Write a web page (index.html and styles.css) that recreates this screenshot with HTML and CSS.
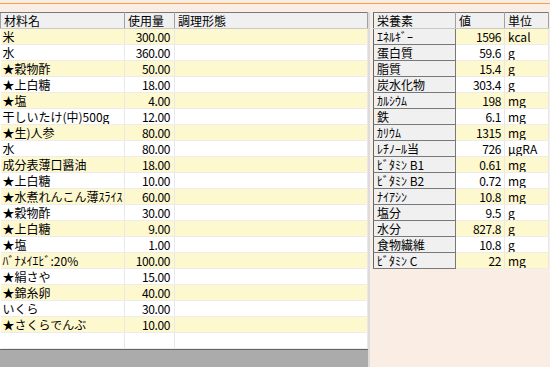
FILE: index.html
```html
<!DOCTYPE html>
<html>
    <head>
        <title>Recipe Nutrition</title>

        <link rel="stylesheet" href="styles.css">
    </head>

    <body>
        <div class="top-bar"></div>

        <div class="panels">
            <div class="recipe-panel">
                <table class="recipe-table">
                    <thead>
                        <tr>
                            <th class="col-name">材料名</th>
                            <th class="col-qty">使用量</th>
                            <th class="col-cook">調理形態</th>
                        </tr>
                    </thead>
                    <tbody>
                        <tr><td>米</td><td class="num">300.00</td><td></td></tr>
                        <tr><td>水</td><td class="num">360.00</td><td></td></tr>
                        <tr><td>★穀物酢</td><td class="num">50.00</td><td></td></tr>
                        <tr><td>★上白糖</td><td class="num">18.00</td><td></td></tr>
                        <tr><td>★塩</td><td class="num">4.00</td><td></td></tr>
                        <tr><td>干しいたけ(中)500g</td><td class="num">12.00</td><td></td></tr>
                        <tr><td>★生)人参</td><td class="num">80.00</td><td></td></tr>
                        <tr><td>水</td><td class="num">80.00</td><td></td></tr>
                        <tr><td>成分表薄口醤油</td><td class="num">18.00</td><td></td></tr>
                        <tr><td>★上白糖</td><td class="num">10.00</td><td></td></tr>
                        <tr><td><div class="clip">★水煮れんこん薄ｽﾗｲｽ</div></td><td class="num">60.00</td><td></td></tr>
                        <tr><td>★穀物酢</td><td class="num">30.00</td><td></td></tr>
                        <tr><td>★上白糖</td><td class="num">9.00</td><td></td></tr>
                        <tr><td>★塩</td><td class="num">1.00</td><td></td></tr>
                        <tr><td>ﾊﾞﾅﾒｲｴﾋﾞ:20%</td><td class="num">100.00</td><td></td></tr>
                        <tr><td>★絹さや</td><td class="num">15.00</td><td></td></tr>
                        <tr><td>★錦糸卵</td><td class="num">40.00</td><td></td></tr>
                        <tr><td>いくら</td><td class="num">30.00</td><td></td></tr>
                        <tr><td>★さくらでんぶ</td><td class="num">10.00</td><td></td></tr>
                        <tr><td></td><td></td><td></td></tr>
                    </tbody>
                </table>
                <div class="recipe-footer"></div>
            </div>

            <div class="nutrient-panel">
                <table class="nutrient-table">
                    <thead>
                        <tr>
                            <th class="col-nutrient">栄養素</th>
                            <th class="col-value">値</th>
                            <th class="col-unit">単位</th>
                        </tr>
                    </thead>
                    <tbody>
                        <tr><th>ｴﾈﾙｷﾞｰ</th><td class="num">1596</td><td>kcal</td></tr>
                        <tr><th>蛋白質</th><td class="num">59.6</td><td>g</td></tr>
                        <tr><th>脂質</th><td class="num">15.4</td><td>g</td></tr>
                        <tr><th>炭水化物</th><td class="num">303.4</td><td>g</td></tr>
                        <tr><th>ｶﾙｼｳﾑ</th><td class="num">198</td><td>mg</td></tr>
                        <tr><th>鉄</th><td class="num">6.1</td><td>mg</td></tr>
                        <tr><th>ｶﾘｳﾑ</th><td class="num">1315</td><td>mg</td></tr>
                        <tr><th>ﾚﾁﾉｰﾙ当</th><td class="num">726</td><td>μgRA</td></tr>
                        <tr><th>ﾋﾞﾀﾐﾝ B1</th><td class="num">0.61</td><td>mg</td></tr>
                        <tr><th>ﾋﾞﾀﾐﾝ B2</th><td class="num">0.72</td><td>mg</td></tr>
                        <tr><th>ﾅｲｱｼﾝ</th><td class="num">10.8</td><td>mg</td></tr>
                        <tr><th>塩分</th><td class="num">9.5</td><td>g</td></tr>
                        <tr><th>水分</th><td class="num">827.8</td><td>g</td></tr>
                        <tr><th>食物繊維</th><td class="num">10.8</td><td>g</td></tr>
                        <tr><th>ﾋﾞﾀﾐﾝ C</th><td class="num">22</td><td>mg</td></tr>
                    </tbody>
                </table>
            </div>
        </div>
    </body>
</html>
```

FILE: styles.css
```css
body {
    margin: 0;
    height: 367px;
    overflow: hidden;

    font-family: "Noto Sans CJK JP", "DejaVu Sans", sans-serif;
    font-size: 12px;
    color: black;
    background-color: rgb(250, 238, 228);
}

.top-bar {
    height: 3px;
    margin-bottom: 8px;
    border-bottom: 1px solid rgb(245, 160, 80);
}

.panels {
    display: flex;
    gap: 3px;
    height: 355px;
}

.recipe-panel {
    display: flex;
    flex-direction: column;
    width: 368px;
    border-right: 2px solid rgb(220, 220, 220);
}

.recipe-footer {
    flex: 1;
    border-top: 1px solid rgb(100, 100, 100);
    background-color: rgb(171, 171, 171);
}

table {
    border-collapse: collapse;
    table-layout: fixed;
}

.recipe-table {
    width: 368px;
    background-color: white;
}

.nutrient-table {
    width: 176px;
}

th,
td {
    height: 15px;
    padding: 0 3px;
    line-height: 15px;
    white-space: nowrap;
    overflow: hidden;
}

thead th {
    font-weight: normal;
    text-align: left;
    background-color: rgb(240, 240, 240);
    border-top: 1px solid rgb(120, 120, 120);
    border-bottom: 1px solid rgb(200, 200, 200);
    border-right: 1px solid rgb(160, 160, 160);
}

.col-name { width: 117px; border-left: 1px solid rgb(160, 160, 160); }
.col-qty { width: 43px; }
.col-cook { width: auto; }

.col-nutrient { width: 75px; border-left: 1px solid rgb(100, 100, 100); }
.col-value { width: 42px; }
.col-unit { width: auto; }

tbody td {
    border-bottom: 1px solid rgb(236, 236, 236);
    border-right: 1px solid rgb(232, 232, 232);
    background-color: white;
}

tbody tr:nth-child(odd) td {
    background-color: rgb(254, 248, 206);
}

.recipe-table tbody td:first-child {
    padding-left: 2px;
}

.num {
    text-align: right;
    padding-right: 4px;
    letter-spacing: -0.4px;
}

.clip {
    width: 120px;
    overflow: hidden;
}

.nutrient-table tbody th {
    font-weight: normal;
    text-align: left;
    background-color: rgb(240, 240, 240);
    border-left: 1px solid rgb(100, 100, 100);
    border-right: 1px solid rgb(120, 120, 120);
    border-bottom: 1px solid rgb(120, 120, 120);
}

.nutrient-table .num {
    padding-right: 3px;
}
```
